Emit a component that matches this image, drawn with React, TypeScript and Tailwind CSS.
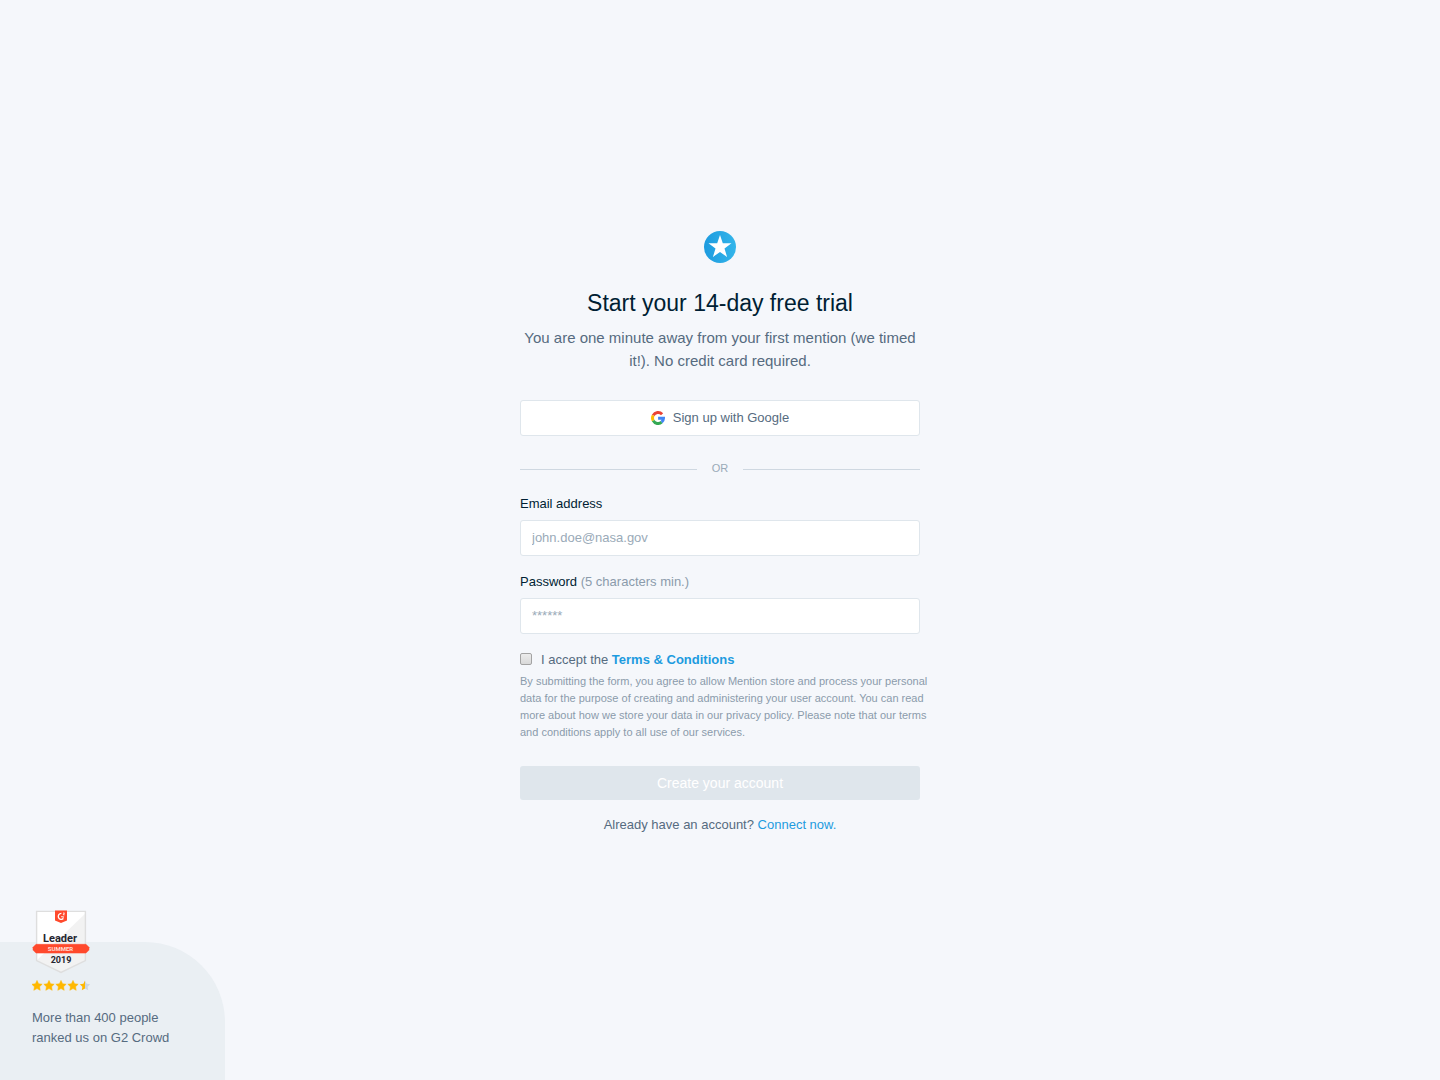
import { useState } from 'react'

const STAR = 'M6 .4l1.6 3.3 3.6.5-2.6 2.5.6 3.6L6 8.6l-3.2 1.7.6-3.6L.8 4.2l3.6-.5z'

function Logo() {
  return (
    <svg width="32" height="32" viewBox="0 0 32 32" role="img" aria-label="Mention">
      <defs>
        <linearGradient id="logo-fill" x1="0" y1="0" x2="1" y2="0">
          <stop offset="0" stopColor="#1d9bdf" />
          <stop offset="1" stopColor="#33b5ea" />
        </linearGradient>
      </defs>
      <circle cx="16" cy="16" r="16" fill="url(#logo-fill)" />
      <path
        fill="#fff"
        d="M16 4l2.8 8.3h8.7l-7 5.2 2.6 8.5L16 20.9 8.9 26l2.6-8.5-7-5.2h8.7z"
      />
    </svg>
  )
}

// ring drawn as four arcs plus the crossbar
function GoogleIcon() {
  return (
    <svg width="14" height="14" viewBox="0 0 14 14" fill="none" strokeWidth="3" aria-hidden="true">
      <path stroke="#ea4335" d="M2.2 4.4A5.5 5.5 0 0 1 11.1 3.3" />
      <path stroke="#fbbc05" d="M2.2 9.6a5.5 5.5 0 0 1 0-5.2" />
      <path stroke="#34a853" d="M2.2 9.6A5.5 5.5 0 0 0 10.6 11.2" />
      <path stroke="#4285f4" d="M7.1 7.2h5.4a5.5 5.5 0 0 1-1.9 4" />
    </svg>
  )
}

function LeaderBadge() {
  return (
    <svg width="58" height="64" viewBox="0 0 58 64" className="font-['Roboto',sans-serif] font-bold">
      <path d="M4.6 1.4h48.8v49.2L29 62.4 4.6 50.6z" fill="#fff" />
      <path d="M53.4 3.5v47.1L29 62.4 4.6 50.6z" fill="#f2f2f2" />
      <path d="M4.6 1.4h48.8v49.2L29 62.4 4.6 50.6z" fill="none" stroke="#dedede" strokeWidth="1.4" />
      <path d="M23 0.5h12v10L29 13l-6-2.5z" fill="#ff492c" />
      <path d="M29.4 3.4a3 3 0 1 0 2 5.1" fill="none" stroke="#fff" strokeWidth="1.3" />
      <path d="M29 6.7h2.6l-1 2M31 3h1.5l-1.4 1.8h1.6" fill="none" stroke="#fff" strokeWidth="0.8" />
      <path d="M4 34.3h50l3 3v2.8l-3 3H4l-3-3v-2.8z" fill="#ff492c" stroke="#ff492c" strokeLinejoin="round" strokeWidth="0.5" />
      <text x="28" y="32" fontSize="11" textAnchor="middle" fill="#252530">Leader</text>
      <text x="28.5" y="41" fontSize="6" textAnchor="middle" fill="#ffdcd5">SUMMER</text>
      <text x="29" y="53" fontSize="9" textAnchor="middle" fill="#252530">2019</text>
    </svg>
  )
}

function Rating() {
  return (
    <svg width="60" height="12" viewBox="0 0 60 12" role="img" aria-label="4.5 out of 5">
      <defs>
        <linearGradient id="half-star">
          <stop offset="0.5" stopColor="#ffb800" />
          <stop offset="0.5" stopColor="#ccd6e2" />
        </linearGradient>
      </defs>
      {[0, 1, 2, 3, 4].map(i => (
        <path
          key={i}
          transform={`translate(${i * 12 - 1} 0)`}
          d={STAR}
          fill={i < 4 ? '#ffb800' : 'url(#half-star)'}
          stroke={i < 4 ? '#ffb800' : 'none'}
          strokeWidth="0.5"
          strokeLinejoin="round"
        />
      ))}
    </svg>
  )
}

const inputClass =
  'mt-1.5 block h-9 w-full rounded-[3px] border border-[#dfe6ec] bg-white px-[11px] pb-0.5 text-[13px] text-[#001e33] placeholder:text-[#9aaab8] focus:border-[#1d9bdf] focus:outline-none'

export default function App() {
  const [accepted, setAccepted] = useState(false)

  return (
    <div className="grid min-h-screen bg-[#f5f7fb] font-['Liberation_Sans',Arial,sans-serif] text-[13px] leading-5 text-[#566b80]">
      <main className="col-start-1 row-start-1 flex flex-col items-center justify-center px-4 pb-3.5">
        <div className="flex w-full max-w-[400px] flex-col">
          <div className="flex justify-center">
            <Logo />
          </div>
          <h1 className="mt-6 text-center text-[23px] leading-8 text-[#001e33]">Start your 14-day free trial</h1>
          <p className="mt-[7px] text-center text-[15px] leading-[23px]">
            You are one minute away from your first mention (we timed it!). No credit card required.
          </p>

          <button
            type="button"
            className="mt-7 flex h-9 w-full items-center justify-center gap-2 rounded-[3px] border border-[#dfe6ec] bg-white">
            <GoogleIcon />
            Sign up with Google
          </button>

          <div className="mt-6 flex items-center gap-[15px] text-[11px] leading-4 text-[#9aaab8]">
            <span className="mt-0.5 h-px flex-1 bg-[#cfd8e1]" />
            OR
            <span className="mt-0.5 h-px flex-1 bg-[#cfd8e1]" />
          </div>

          <form onSubmit={e => e.preventDefault()}>
            <div className="mt-[18px]">
              <label htmlFor="email" className="block text-[#001e33]">Email address</label>
              <input id="email" type="email" placeholder="john.doe@nasa.gov" className={inputClass} />
            </div>

            <div className="mt-4">
              <label htmlFor="password" className="block text-[#001e33]">
                Password <span className="text-[#8b9bab]">(5 characters min.)</span>
              </label>
              <input id="password" type="password" placeholder="******" className={inputClass} />
            </div>

            <div className="mt-4 flex items-center">
              <input
                id="terms"
                type="checkbox"
                checked={accepted}
                onChange={e => setAccepted(e.target.checked)}
                className="mr-[9px] mb-0.5 size-3 appearance-none rounded-[2px] border border-[#a3a3a3] bg-linear-to-b from-[#ececec] to-[#d9d9d9] checked:from-[#1d9bdf] checked:to-[#1d9bdf]"
              />
              <label htmlFor="terms">
                I accept the <a href="#terms" className="font-bold text-[#1d9bdf]">Terms &amp; Conditions</a>
              </label>
            </div>
            <p className="-mr-3 mt-[3px] text-[11px] leading-[17px] text-[#8b9bab]">
              By submitting the form, you agree to allow Mention store and process your personal data for the purpose of
              creating and administering your user account. You can read more about how we store your data in our privacy
              policy. Please note that our terms and conditions apply to all use of our services.
            </p>

            <button
              type="submit"
              disabled={!accepted}
              className="mt-[25px] block h-[34px] w-full rounded-[3px] bg-[#1d9bdf] text-[14px] text-white disabled:bg-[#dfe6ec]">
              Create your account
            </button>
          </form>

          <p className="mt-[15px] text-center">
            Already have an account? <a href="#login" className="text-[#1d9bdf]">Connect now.</a>
          </p>
        </div>
      </main>

      <aside className="col-start-1 row-start-1 flex w-[225px] flex-col gap-1.5 self-end rounded-tr-[80px] bg-[#eaeff3] px-8 pb-8">
        <div className="-mt-8">
          <LeaderBadge />
        </div>
        <Rating />
        <p className="mt-2.5">
          More than 400 people
          <br />
          ranked us on G2 Crowd
        </p>
      </aside>
    </div>
  )
}
